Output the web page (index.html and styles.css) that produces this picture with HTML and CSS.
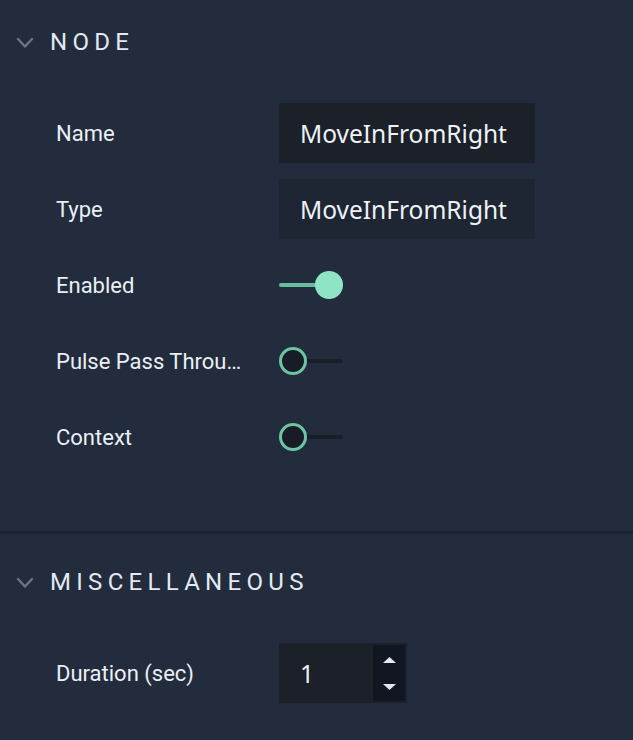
FILE: index.html
```html
<!DOCTYPE html>
<html lang="en">
<head>
<meta charset="utf-8">
<title>Node Inspector</title>
<link rel="stylesheet" href="styles.css">
</head>
<body>
<div class="panel">
  <section class="section">
    <div class="section-header">
      <svg class="chevron" width="18" height="12" viewBox="0 0 18 12"><path d="M2 2 L9 9.5 L16 2" fill="none" stroke="#6e7584" stroke-width="2.4" stroke-linecap="round" stroke-linejoin="round"/></svg>
      <span class="section-title">NODE</span>
    </div>
    <div class="rows">
      <div class="row">
        <div class="label">Name</div>
        <div class="control"><div class="text-input">MoveInFromRight</div></div>
      </div>
      <div class="row">
        <div class="label">Type</div>
        <div class="control"><div class="text-input readonly">MoveInFromRight</div></div>
      </div>
      <div class="row">
        <div class="label">Enabled</div>
        <div class="control"><div class="toggle on"><span class="track"></span><span class="knob"></span></div></div>
      </div>
      <div class="row">
        <div class="label" title="Pulse Pass Through">Pulse Pass Throu…</div>
        <div class="control"><div class="toggle"><span class="track"></span><span class="knob"></span></div></div>
      </div>
      <div class="row">
        <div class="label">Context</div>
        <div class="control"><div class="toggle"><span class="track"></span><span class="knob"></span></div></div>
      </div>
    </div>
  </section>
  <div class="divider"></div>
  <section class="section second">
    <div class="section-header">
      <svg class="chevron" width="18" height="12" viewBox="0 0 18 12"><path d="M2 2 L9 9.5 L16 2" fill="none" stroke="#6e7584" stroke-width="2.4" stroke-linecap="round" stroke-linejoin="round"/></svg>
      <span class="section-title">MISCELLANEOUS</span>
    </div>
    <div class="rows">
      <div class="row">
        <div class="label">Duration (sec)</div>
        <div class="control">
          <div class="number-input">
            <span class="number-value">1</span>
            <div class="spinner">
              <svg width="13" height="6" viewBox="0 0 13 6"><path d="M6.5 0 L13 6 L0 6 Z" fill="#e4e8ee"/></svg>
              <svg width="13" height="6" viewBox="0 0 13 6"><path d="M0 0 L13 0 L6.5 6 Z" fill="#e4e8ee"/></svg>
            </div>
          </div>
        </div>
      </div>
    </div>
  </section>
</div>
</body>
</html>
```
FILE: styles.css
```css
html, body {
  margin: 0;
  padding: 0;
  background: #222c3c;
}
body {
  width: 633px;
  height: 740px;
  overflow: hidden;
  font-family: Roboto, "Liberation Sans", sans-serif;
  color: #e9eef4;
}
.panel {
  display: flex;
  flex-direction: column;
}
.section {
  display: flex;
  flex-direction: column;
}
.section.second {
  margin-top: 6px;
}
.section-header {
  height: 84px;
  display: flex;
  align-items: center;
  padding-left: 16px;
  gap: 16px;
}
.chevron {
  display: block;
  margin-top: 1px;
}
.section-title {
  font-size: 24px;
  font-weight: 400;
  letter-spacing: 5.3px;
  color: #e3e9f0;
}
.rows {
  display: flex;
  flex-direction: column;
  gap: 16px;
  padding: 19px 0 0 56px;
}
.section:first-child .rows {
  padding-bottom: 64px;
}
.divider {
  height: 3px;
  background: #1b2230;
}
.row {
  height: 60px;
  display: flex;
  align-items: center;
}
.label {
  width: 192px;
  margin-right: 31px;
  font-size: 22px;
  white-space: nowrap;
  overflow: hidden;
  color: #eaeff5;
}
.control {
  display: flex;
  align-items: center;
}
.text-input {
  width: 256px;
  height: 60px;
  box-sizing: border-box;
  padding-left: 21px;
  display: flex;
  align-items: center;
  background: #1b2029;
  font-family: "Noto Sans", "Open Sans", sans-serif;
  font-size: 24.5px;
  color: #eef2f7;
}
.text-input.readonly {
  background: #1e2533;
}
.toggle {
  position: relative;
  width: 64px;
  height: 28px;
}
.toggle .track {
  position: absolute;
  left: 0;
  right: 0;
  top: 12px;
  height: 4px;
  border-radius: 2px;
  background: #191e27;
}
.toggle .knob {
  position: absolute;
  left: 0;
  top: 0;
  width: 28px;
  height: 28px;
  box-sizing: border-box;
  border-radius: 50%;
  border: 3px solid #6cc4a2;
  background: #171c26;
}
.toggle.on .track {
  background: #66be9c;
}
.toggle.on .knob {
  left: 36px;
  border: none;
  background: #8fe4c6;
}
.number-input {
  width: 128px;
  height: 60px;
  box-sizing: border-box;
  padding: 2px 2px 2px 21px;
  display: flex;
  align-items: center;
  justify-content: space-between;
  background: #1b2029;
}
.number-value {
  font-family: "Noto Sans", "Open Sans", sans-serif;
  font-size: 24.5px;
  color: #eef2f7;
}
.spinner {
  width: 32px;
  height: 56px;
  background: #111622;
  display: flex;
  flex-direction: column;
  align-items: center;
  justify-content: center;
  gap: 21px;
}
.spinner svg {
  display: block;
}
```
